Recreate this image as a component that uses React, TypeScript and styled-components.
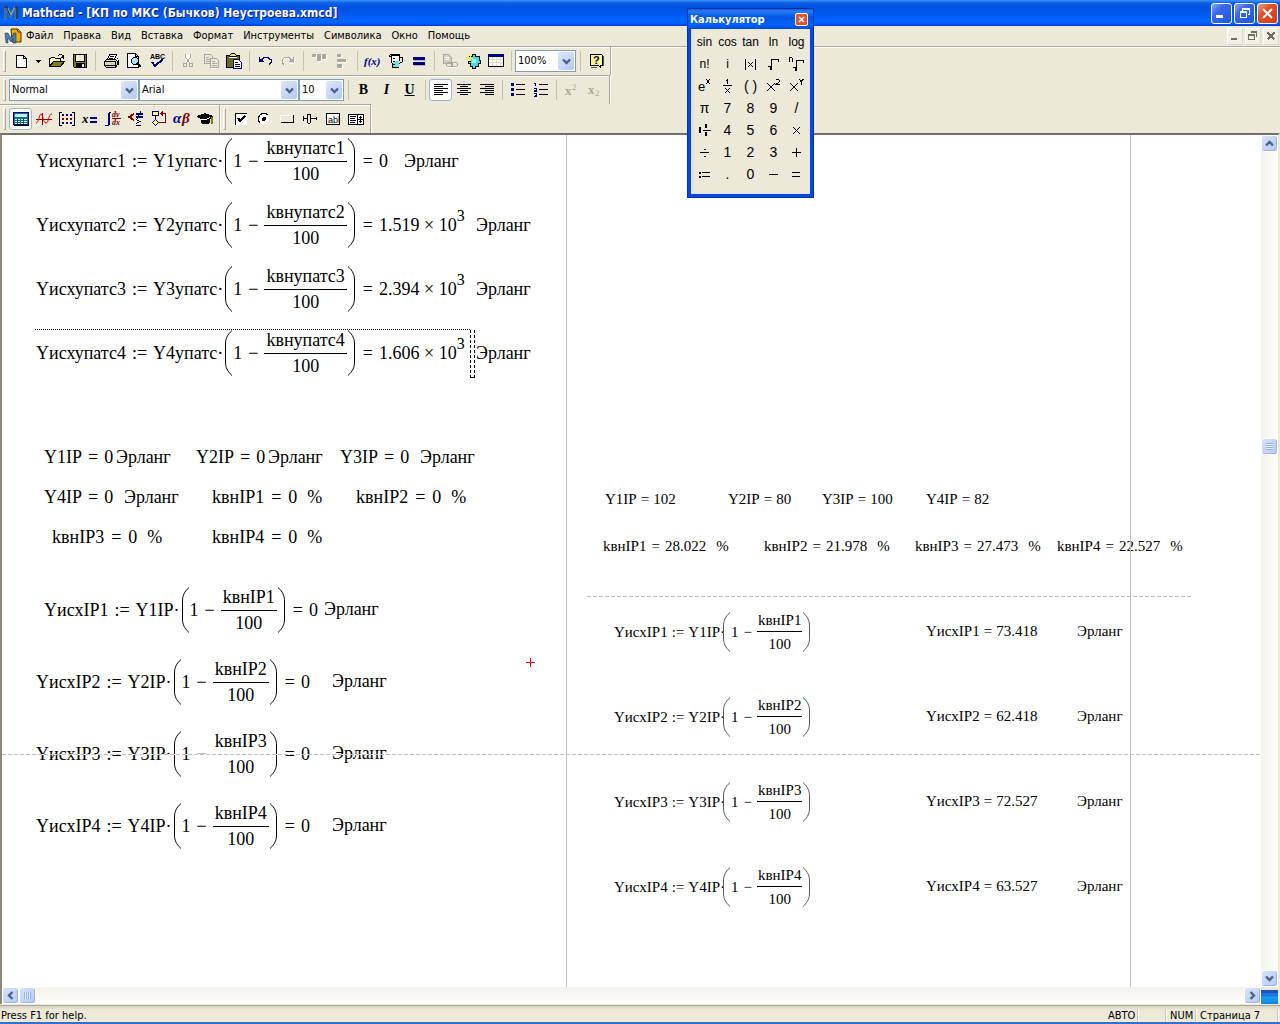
import React, { ReactNode } from "react";
import styled, { createGlobalStyle, css } from "styled-components";

const ui = `Tahoma, "DejaVu Sans Condensed", "Noto Sans", sans-serif`;
const serif = `"Liberation Serif", "Times New Roman", serif`;
const face = "#ece9d8";
const shade = "#aca899";
const navy = "#000080";

const GlobalStyle = createGlobalStyle`
  body { margin: 0; background: ${face}; }
  *, *::before, *::after { box-sizing: border-box; }
  button, select { font: inherit; color: inherit; margin: 0; }
  svg { overflow: visible; }
`;

const Frame = styled.div`
  position: relative;
  display: flex;
  flex-direction: column;
  height: 100vh;
  overflow: hidden;
  background: ${face};
  border-bottom: 2px solid #2f71cd;
  font: 11px/14px ${ui};
  color: #000;
`;

/* ---------- title bar ---------- */

const TitleBar = styled.header`
  display: flex;
  align-items: center;
  gap: 3px;
  height: 26px;
  flex: none;
  padding: 0 2px 0 3px;
  background: linear-gradient(#3f94ff 0, #0a5fe6 3px, #0053e1 8px, #0058ee 14px, #0066ff 20px, #0063f7 23px, #003dd7 26px);
`;

const Title = styled.h1`
  flex: 1;
  margin: 0;
  font: bold 12px/18px "Trebuchet MS", "DejaVu Sans Condensed", sans-serif;
  color: #fff;
  text-shadow: 1px 1px 0 #0f1089;
  white-space: nowrap;
`;

const CaptionButton = styled.button<{ $close?: boolean }>`
  display: grid;
  place-items: center;
  width: 21px;
  height: 21px;
  padding: 0;
  border: 1px solid #fff;
  border-radius: 3px;
  background: ${(p) =>
    p.$close
      ? "linear-gradient(135deg, #f0a08a 0, #e0532f 35%, #d03d12 100%)"
      : "linear-gradient(135deg, #8ba9f5 0, #3a68e4 35%, #1c55f0 100%)"};
  & + & { margin-left: -1px; }
`;

/* ---------- menu ---------- */

const MenuBar = styled.nav`
  display: flex;
  align-items: center;
  height: 20px;
  flex: none;
  padding: 0 1px 0 5px;
`;

const MenuItem = styled.button`
  padding: 0 5px;
  border: 0;
  background: none;
  line-height: 16px;
`;

const ChildButtons = styled.div`
  display: flex;
  gap: 2px;
  margin-left: auto;
`;

const ChildButton = styled.button`
  display: grid;
  place-items: center;
  width: 16px;
  height: 17px;
  padding: 0;
  border: 1px solid;
  border-color: #fff #dcd9ca #dcd9ca #fff;
  background: #f1efe4;
`;

/* ---------- toolbars ---------- */

const Rebar = styled.div`
  display: flex;
  flex-direction: column;
  flex: none;
`;

const RebarRow = styled.div<{ $short?: boolean }>`
  display: flex;
  align-self: ${(p) => (p.$short ? "flex-start" : "stretch")};
  height: 29px;
  border-top: 1px solid ${shade};
  box-shadow: inset 0 1px #fff;
`;

const Toolbar = styled.div`
  display: flex;
  align-items: center;
  padding: 1px 3px 1px 3px;
  border-right: 1px solid ${shade};
  box-shadow: 1px 0 #fff;
  &::before {
    content: "";
    width: 3px;
    height: 22px;
    margin-right: 3px;
    border: solid;
    border-width: 1px;
    border-color: #fff ${shade} ${shade} #fff;
  }
`;

const ToolButton = styled.button<{ $active?: boolean; $narrow?: boolean }>`
  display: grid;
  place-items: center;
  width: ${(p) => (p.$narrow ? 13 : 23)}px;
  height: 22px;
  padding: 0;
  border: 1px solid transparent;
  border-radius: 3px;
  background: none;
  ${(p) =>
    p.$active &&
    css`
      border-color: #98b5d3;
      background: #fff;
    `}
`;

const Divider = styled.span`
  width: 1px;
  height: 20px;
  margin: 0 3px 0 4px;
  background: #c5c2b2;
`;

const ComboFrame = styled.label<{ $width: number }>`
  display: grid;
  grid-template-columns: 1fr 17px;
  align-items: center;
  width: ${(p) => p.$width}px;
  height: 22px;
  border: 1px solid #7f9db9;
  background: #fff;
`;

const ComboSelect = styled.select`
  grid-area: 1 / 1 / 2 / 3;
  height: 20px;
  padding: 0 18px 0 2px;
  border: 0;
  background: none;
  appearance: none;
  outline: none;
`;

const ComboArrow = styled.span`
  grid-area: 1 / 2;
  display: grid;
  place-items: center;
  width: 16px;
  height: 18px;
  border-radius: 2px;
  background: linear-gradient(135deg, #dde6fd, #b4c8f6);
  pointer-events: none;
`;

const Letter = styled.span<{ $kind: "b" | "i" | "u" }>`
  font: ${(p) => (p.$kind === "i" ? "italic bold" : "bold")} 14px/16px ${serif};
  text-decoration: ${(p) => (p.$kind === "u" ? "underline" : "none")};
`;

/* ---------- document ---------- */

const DocFrame = styled.div`
  display: grid;
  grid-template-columns: 1fr 17px;
  grid-template-rows: 1fr 17px;
  flex: 1;
  min-height: 0;
  border: solid;
  border-width: 2px 2px 0 2px;
  border-color: #716f64 ${face} ${face} #8b887a;
`;

const Sheet = styled.main`
  position: relative;
  overflow: hidden;
  background: #fff;
  font: 18px/20px ${serif};
`;

const Region = styled.div<{ $x: number; $y: number; $small?: boolean }>`
  position: absolute;
  left: ${(p) => p.$x}px;
  top: ${(p) => p.$y}px;
  display: flex;
  align-items: center;
  white-space: nowrap;
  ${(p) =>
    p.$small &&
    css`
      font-size: 15px;
      line-height: 16px;
    `}
`;

const Operator = styled.span<{ $gap: number }>`
  margin: 0 ${(p) => p.$gap}px;
`;

const Fraction = styled.span<{ $small?: boolean }>`
  display: flex;
  flex-direction: column;
  text-align: center;
  & > :first-child { padding: 0 ${(p) => (p.$small ? 1 : 2)}px 3px; }
  & > :last-child { padding-top: ${(p) => (p.$small ? 4 : 2)}px; border-top: 1px solid #000; }
`;

const Power = styled.sup`
  font-size: 16px;
  line-height: 20px;
  padding-bottom: 18px;
  vertical-align: baseline;
`;

const Percent = styled.span`
  margin-left: 10px;
`;

const MarginLine = styled.div<{ $x: number }>`
  position: absolute;
  top: 0;
  bottom: 0;
  left: ${(p) => p.$x}px;
  width: 1px;
  background: #c0c0c0;
`;

const PageBreak = styled.div<{ $x: number; $y: number; $width?: number }>`
  position: absolute;
  left: ${(p) => p.$x}px;
  top: ${(p) => p.$y}px;
  ${(p) => (p.$width ? `width: ${p.$width}px;` : "right: 0;")}
  height: 1px;
  background: repeating-linear-gradient(90deg, #c0c0c0 0 4px, #fff 4px 6px);
`;

const SelectionTop = styled.div`
  position: absolute;
  left: 33px;
  top: 194px;
  width: 436px;
  height: 1px;
  background: repeating-linear-gradient(90deg, #000 0 1px, #fff 1px 2px);
`;

const SelectionEdge = styled.div`
  position: absolute;
  left: 468px;
  top: 195px;
  width: 5px;
  height: 48px;
  border: 1px dashed #000;
  border-top: 0;
`;

const Crosshair = styled.svg`
  position: absolute;
  left: 524px;
  top: 523px;
`;

/* ---------- scroll bars ---------- */

const ScrollBar = styled.div<{ $vertical?: boolean }>`
  display: flex;
  flex-direction: ${(p) => (p.$vertical ? "column" : "row")};
  background: linear-gradient(${(p) => (p.$vertical ? "90deg" : "180deg")}, #f3f1ec, #fefefb);
`;

const ScrollButton = styled.button`
  display: grid;
  place-items: center;
  width: 17px;
  height: 17px;
  flex: none;
  padding: 0;
  border: 1px solid #fff;
  border-radius: 3px;
  background: linear-gradient(135deg, #d6e2fd, #b5caf8);
  box-shadow: inset -1px -1px #9cb4e4;
`;

const Track = styled.span<{ $grow: number }>`
  flex: ${(p) => p.$grow} 1 0;
`;

const Corner = styled.div`
  margin-top: 3px;
  background: linear-gradient(#1c55c8 0 3px, #2a8cf0 4px, #1263d4 5px, #1a9cf0 7px, #1785e0 100%);
`;

/* ---------- status bar ---------- */

const StatusBar = styled.footer`
  display: flex;
  align-items: center;
  height: 17px;
  flex: none;
  margin-top: 1px;
  padding: 3px 2px 0 0;
  border-top: 1px solid ${shade};
  background: linear-gradient(#d6d3c3, ${face} 4px);
`;

const StatusHint = styled.span`
  flex: 1;
  padding-left: 1px;
`;

const StatusCell = styled.span<{ $width: number }>`
  width: ${(p) => p.$width}px;
  height: 13px;
  line-height: 13px;
  padding-left: 4px;
  border-right: 1px solid #c8c5b5;
  box-shadow: 1px 0 #fff;
  white-space: nowrap;
`;

/* ---------- calculator palette ---------- */

const Palette = styled.section`
  position: absolute;
  left: 687px;
  top: 8px;
  width: 127px;
  height: 190px;
  border: solid #0a46dd;
  border-width: 0 4px 4px;
  background: ${face};
  box-shadow: inset 0 0 0 1px #d8e4fb, inset 1px 0 #0a46dd;
  outline: 1px solid #0831a8;
  outline-offset: -1px;
`;

const PaletteTitle = styled.header`
  display: flex;
  align-items: center;
  justify-content: space-between;
  height: 21px;
  margin: 0 -3px;
  padding: 2px 5px 0 2px;
  background: linear-gradient(#0a3fc4, #2a7cf5 3px, #0055e5 9px, #0062fa 17px, #0048d8);
  color: #fff;
  font-weight: bold;
`;

const PaletteClose = styled.button`
  display: grid;
  place-items: center;
  width: 13px;
  height: 13px;
  padding: 0;
  border: 1px solid #fff;
  border-radius: 2px;
  background: #e0532f;
`;

const Keys = styled.div`
  display: grid;
  grid-template-columns: repeat(5, 23px);
  grid-auto-rows: 22px;
  justify-content: center;
  padding-top: 2px;
`;

const Key = styled.button<{ $word?: boolean }>`
  display: grid;
  place-items: center;
  padding: 0;
  border: 0;
  background: none;
  font: ${(p) => (p.$word ? 12 : 14)}px/16px "Liberation Sans", Arial, sans-serif;
`;

/* ---------- drawings ---------- */

const Pic = ({ children, size = 16, w, h }: { children: ReactNode; size?: number; w?: number; h?: number }) => (
  <svg width={w ?? size} height={h ?? size} viewBox={`0 0 ${w ?? size} ${h ?? size}`} shapeRendering="crispEdges" aria-hidden="true">
    {children}
  </svg>
);

const L = ({ d, c = "#000", w = 1 }: { d: string; c?: string; w?: number }) => (
  <path d={d} fill="none" stroke={c} strokeWidth={w} />
);

const Chevron = ({ dir }: { dir: "up" | "down" | "left" | "right" }) => {
  const turn = { down: 0, up: 180, left: 90, right: 270 }[dir];
  return (
    <svg width="9" height="9" viewBox="0 0 9 9" aria-hidden="true">
      <path d="M1 2.5 4.5 6 8 2.5" fill="none" stroke="#4d6185" strokeWidth="2.4" transform={`rotate(${turn} 4.5 4.5)`} />
    </svg>
  );
};

const Grip = ({ vertical }: { vertical?: boolean }) => (
  <Pic size={9}>
    <g transform={vertical ? undefined : "rotate(90 4.5 4.5)"}>
      <L d="M1 1.5h7M1 3.5h7M1 5.5h7M1 7.5h7" c="#8cb0f8" />
      <L d="M1 2.5h7M1 4.5h7M1 6.5h7" c="#eef4fe" />
    </g>
  </Pic>
);

const LogoM = () => (
  <svg width="16" height="16" viewBox="0 0 16 16" aria-hidden="true">
    <path d="M0 1h5l3 6 3-6h4v12l1 2h-5V7l-3 7h-1L4 7v8H0l1-2V3z" fill="#3f6f9f" />
    <path d="M1 2h3l3 8M12 2h2v12" fill="none" stroke="#1d3553" strokeWidth="1.5" />
    <path d="M5 3l3 7 3-7" fill="none" stroke="#8fb0c8" />
  </svg>
);

const DocLogo = () => (
  <svg width="16" height="16" viewBox="0 0 16 16" aria-hidden="true">
    <path d="M0 2h8v14H0z" fill="#fff" />
    <path d="M6 1h7l3 3v10H7z" fill="#f5a800" stroke="#4a3200" />
    <path d="M12 1l1 3h3" fill="#ffe08a" stroke="#4a3200" />
    <path d="M0 5h3l3 5 3-5h2v10H8V10l-2 4-3-4v5H1z" fill="#4d7fa5" stroke="#1e3850" strokeWidth=".6" />
  </svg>
);

const icons: Record<string, ReactNode> = {
  new: <Pic><path d="M3.5 2.5h7l3 3v9h-10z" fill="#fff" stroke="#000" /><L d="M10.5 2.5v3h3" /></Pic>,
  drop: <Pic w={5} h={3}><path d="M0 0h5v1H4v1H3v1H2V2H1V1H0z" /></Pic>,
  open: (
    <Pic>
      <path d="M.5 13.5v-8h1l1-1h3l1 1h5v3" fill="#ffff9c" stroke="#000" />
      <path d="M.5 13.5l4-5h11l-4 5z" fill="#808000" stroke="#000" />
      <L d="M9 2.5h1M10 1.5h3M13 2.5h1M14.5 2v4M12 4.5h3M13 3.5h2" />
    </Pic>
  ),
  save: (
    <Pic>
      <path d="M1.5 1.5h13v13h-12l-1-1z" fill="#808000" stroke="#000" />
      <path d="M4 2h8v6H4z" fill={face} /><path d="M4 9.5h9V15H4z" /><path d="M10 11h2v3h-2z" fill={face} />
      <L d="M3.5 2v6.5h9V2" />
    </Pic>
  ),
  print: (
    <Pic>
      <path d="M4.5 6.5l2-5h7l-2 5" fill="#fff" stroke="#000" /><L d="M7 3.5h4M6 5.5h4" />
      <path d="M1.5 8.5l2-2h9l2 2v3l-2 3h-9l-2-2z" fill="#d8d4c4" stroke="#000" />
      <L d="M1 8.5h11M2 12.5h11M12.5 8v6M15 6.5v5M14 5.5h1M4 14.5h9" /><L d="M8 10.5h2" c="#e0d800" />
    </Pic>
  ),
  preview: (
    <Pic>
      <path d="M1.5.5h8l3 3v11h-11z" fill="#fff" stroke="#000" /><L d="M9.5.5v3h3" />
      <circle cx="9" cy="8" r="3.5" fill="#9fe8ee" stroke="#000" /><L d="M11 10l4 4" w={2} /><L d="M8 6.5h1" c="#fff" />
    </Pic>
  ),
  spell: (
    <Pic>
      <text x="1" y="6" fontSize="7" fontWeight="bold" fontFamily="Liberation Sans">ABC</text>
      <L d="M3 9l3 4 8-7" c={navy} w={2} />
    </Pic>
  ),
  cut: (
    <Pic>
      <L d="M6 1l4 9M10 1L6 10" c="#fff" w={2} /><L d="M5.5 1v3l4 6M10.5 1v3l-4 6" c={shade} />
      <circle cx="5" cy="12" r="2" fill="none" stroke={shade} /><circle cx="11" cy="12" r="2" fill="none" stroke={shade} />
    </Pic>
  ),
  copy: (
    <Pic>
      <path d="M1.5 1.5h6l2 2v7h-8z" fill={face} stroke={shade} /><L d="M3 4.5h3M3 6.5h4M3 8.5h4" c={shade} />
      <path d="M7.5 5.5h6l2 2v7h-8z" fill={face} stroke={shade} /><L d="M9 8.5h3M9 10.5h5M9 12.5h5" c={shade} /><L d="M8 15.5h8" c="#fff" />
    </Pic>
  ),
  paste: (
    <Pic>
      <path d="M.5 2.5h13v12H.5z" fill="#6b6b1a" stroke="#000" /><path d="M3.5 3.5v-1l2-2h3l2 2v1z" fill="#f4ee60" stroke="#000" />
      <L d="M3 4.5h8" c="#fff" /><path d="M7.5 6.5h5l3 3v6h-8z" fill="#fff" stroke={navy} /><L d="M9 9.5h3M9 11.5h5M9 13.5h5" c={navy} />
    </Pic>
  ),
  undo: <Pic><L d="M2.5 4v5M2 8.5h5M3 7.5h3M3 6.5h2M5 6.5l2-2h4l3 2v3l-2 2" c={navy} /><L d="M6 5.5l2-1h3l2 2" c={navy} /></Pic>,
  redo: (
    <Pic>
      <L d="M14.5 5v5H9M11 6.5L9 5.5H5l-2 2v3l2 2" c="#fff" /><L d="M13.5 4v5M14 8.5H9M13 7.5h-3M13 6.5h-2M11 6.5l-2-2H5l-3 2v3l2 2" c={shade} />
    </Pic>
  ),
  alignTop: <Pic><path d="M2 2h4v3H2zM7 2h4v7H7zM12 2h4v5h-4z" fill="#fff" /><path d="M1 1h4v3H1zM6 1h4v7H6zM11 1h4v5h-4z" fill={shade} /></Pic>,
  alignLeft: <Pic><path d="M4 2h4v3H4zM4 7h9v3H4zM4 12h5v4H4z" fill="#fff" /><path d="M3 1h4v3H3zM3 6h9v3H3zM3 11h5v4H3z" fill={shade} /></Pic>,
  fx: (
    <svg width="18" height="16" viewBox="0 0 18 16" aria-hidden="true">
      <text x="0" y="12" fontSize="11" fontStyle="italic" fontWeight="bold" fontFamily="Liberation Serif" fill={navy}>f(x)</text>
    </svg>
  ),
  cup: (
    <Pic>
      <path d="M3.5 2.5h8l-1 12h-6l-1-9z" fill="#fff" stroke="#000" /><path d="M5 8h6v6H5z" fill="#6fe3ea" />
      <L d="M1.5 1.5h10M11 4.5h3.5v4l-3 2M5 5.5h2M5 8.5h2M5 11.5h2M1.5 1.5v2h2" />
    </Pic>
  ),
  equals: <Pic><path d="M2 4h12v3H2zM2 9h12v3H2z" fill={navy} /><L d="M3 7.5h12M3 12.5h12" c="#b8b5a5" /></Pic>,
  link: (
    <Pic>
      <path d="M1.5 1.5h5l3 3v6h-8z" fill="#d3d0c0" stroke={shade} /><L d="M3 4.5h4M3 6.5h4" c="#fff" />
      <rect x="4.5" y="9.5" width="6" height="4" rx="2" fill="none" stroke={shade} /><rect x="9.5" y="9.5" width="6" height="4" rx="2" fill="none" stroke={shade} />
      <L d="M5 14.5h10" c="#fff" />
    </Pic>
  ),
  component: (
    <Pic>
      <path d="M4 3h3V1h3v2h4v4h1v3h-2v3h-3v2H7v-2H5v-3H3V8h2V5z" fill="#3fdbe6" stroke="#000" />
      <L d="M1 1l5 5M5 0v8M0 5h8M1 8l5-5" c="#ffee30" /><path d="M7 6h4v4H7z" fill="#a8f2f5" />
    </Pic>
  ),
  table: <Pic><path d="M.5 1.5h15v12H.5z" fill="#fff" stroke="#000" /><path d="M0 1h16v3H0z" fill={navy} /><L d="M1 6.5h14M1 9.5h14M4.5 4v9M8.5 4v9M12.5 4v9" c="#e6dccb" /></Pic>,
  help: (
    <Pic>
      <path d="M2.5 1.5h11l1 1v10h-2v2l-2-2h-8z" fill="#fffb80" stroke="#000" /><L d="M3 14.5h6M15.5 3v10" c="#555" />
      <text x="5" y="11" fontSize="11" fontWeight="bold" fontFamily="Liberation Sans" fill={navy}>?</text>
    </Pic>
  ),
  left: <Pic><L d="M1 2.5h14M1 4.5h9M1 6.5h14M1 8.5h9M1 10.5h14M1 12.5h9" /></Pic>,
  center: <Pic><L d="M1 2.5h14M4 4.5h8M1 6.5h14M4 8.5h8M1 10.5h14M4 12.5h8" /></Pic>,
  right: <Pic><L d="M1 2.5h14M6 4.5h9M1 6.5h14M6 8.5h9M1 10.5h14M6 12.5h9" /></Pic>,
  bullets: <Pic><path d="M1 1h3v3H1zM1 6h3v3H1zM1 11h3v3H1z" fill={navy} /><L d="M6 2.5h9M6 7.5h9M6 12.5h9" /></Pic>,
  numbers: <Pic><L d="M1 1.5h2M2.5 1v3M1 6.5h2v1.5h-1.5v1.5H4M1 11.5h2.5v3H1M2 13h1" c={navy} /><L d="M6 2.5h9M6 7.5h9M6 12.5h9" /></Pic>,
  sup: <Pic><text x="1" y="13" fontSize="13" fontWeight="bold" fontFamily="Liberation Serif" fill={shade}>x</text><text x="8" y="8" fontSize="9" fontFamily="Liberation Serif" fill={shade}>2</text></Pic>,
  sub: <Pic><text x="1" y="12" fontSize="13" fontWeight="bold" fontFamily="Liberation Serif" fill={shade}>x</text><text x="8" y="14" fontSize="9" fontFamily="Liberation Serif" fill={shade}>2</text></Pic>,
  calc: (
    <Pic>
      <path d="M.5 1.5h15v12H.5z" fill="#1a6f86" stroke={navy} /><path d="M2 3h12v3H2z" fill="#bdf3f3" /><L d="M1 14.5h15" />
      <L d="M2 8.5h12M2 10.5h12M2 12.5h12" c="#d9fbfb" /><L d="M4.5 8v5M7.5 8v5M10.5 8v5" c="#1a4f86" />
    </Pic>
  ),
  graph: <Pic><L d="M0 8.5h16M6.5 2v12" c="#800000" /><path d="M0 12c3 0 3-9 5-9s2 9 5 9 2-9 6-9" fill="none" stroke="#e00000" shapeRendering="auto" /></Pic>,
  matrix: (
    <Pic>
      <L d="M3 1.5H.5v13H3M13 1.5h2.5v13H13" />
      <path d="M3 3h2v2H3zM7 3h2v2H7zM11 3h2v2h-2zM3 11h2v2H3zM7 11h2v2H7zM11 11h2v2h-2z" fill={navy} /><path d="M3 7h2v2H3zM7 7h2v2H7zM11 7h2v2h-2z" fill="#800000" />
    </Pic>
  ),
  xeq: <Pic><text x="0" y="12" fontSize="13" fontStyle="italic" fontWeight="bold" fontFamily="Liberation Serif">x</text><path d="M8 6h7v2H8zM8 10h7v2H8z" fill={navy} /></Pic>,
  integral: (
    <Pic>
      <path d="M6 1.5H5c-1 0-1 1-1 2v9c0 1 0 2-2 2H0" fill="none" stroke={navy} strokeWidth="1.6" /><L d="M7 7.5h9" c="#800000" />
      <text x="7" y="6" fontSize="8" fontStyle="italic" fontWeight="bold" fontFamily="Liberation Serif" fill="#800000">dy</text>
      <text x="7" y="14" fontSize="8" fontStyle="italic" fontWeight="bold" fontFamily="Liberation Serif" fill="#800000">dx</text>
    </Pic>
  ),
  bool: <Pic><L d="M6 3L1 6l5 3" c="#800000" w={2} /><path d="M8 2h7v2H8zM8 5h7v2H8z" fill={navy} /><L d="M13 0L9 8" c={navy} /><L d="M8 8.5l4 2-4 2M8 14.5h5" /></Pic>,
  program: (
    <Pic>
      <path d="M1.5.5h6v4h-6z" fill="#ffff80" stroke={navy} /><path d="M4.5 8.5l3 3-3 3-3-3z" fill="#ffff80" stroke={navy} /><L d="M4.5 5v4" c={navy} />
      <L d="M8 11.5h6.5v-9H10M12 0.5l-2 2 2 2" c="#800000" />
    </Pic>
  ),
  greek: (
    <svg width="18" height="16" viewBox="0 0 18 16" aria-hidden="true">
      <text x="0" y="12" fontSize="15" fontStyle="italic" fontWeight="bold" fontFamily="Liberation Serif" fill={navy}>α</text>
      <text x="9" y="12" fontSize="15" fontStyle="italic" fontWeight="bold" fontFamily="Liberation Serif" fill="#800000">β</text>
    </svg>
  ),
  cap: <Pic><path d="M0 5l8-3 8 3v2l-3 1v4l-3 1H6l-2-1V8L0 6z" /><L d="M4 8.5h5l4-2" c="#fff" /><L d="M14.5 6v7" c="#808000" w={2} /></Pic>,
  check: <Pic><path d="M2.5 2.5h11v11h-11z" fill="#fff" stroke="#000" /><L d="M13.5 3v10.5H3" c="#fff" /><L d="M5 7l2 3 5-5" w={2} /></Pic>,
  radio: <Pic><circle cx="8" cy="8" r="5" fill="#fff" stroke="#fff" /><path d="M4 12a5 5 0 0 1 8-8" fill="none" stroke="#000" /><circle cx="8" cy="8" r="2" /></Pic>,
  push: <Pic><path d="M2 5h12v6H2z" fill={face} /><L d="M2 4.5h11M1.5 4v7" c="#fff" /><L d="M2 11.5h12.5V4" /></Pic>,
  slider: <Pic><L d="M1 7.5h4M9 7.5h5M1.5 5v5M14.5 6v3" /><path d="M5.5 3.5h3v8l-1 1h-1l-1-1z" fill={face} stroke="#000" /></Pic>,
  text: <Pic><path d="M1.5 2.5h13v11h-13z" fill="#fff" stroke="#000" /><text x="3" y="12" fontSize="9" fontFamily="Liberation Sans">abl</text></Pic>,
  list: <Pic><path d="M.5 3.5h15v10H.5z" fill="#fff" stroke="#000" /><L d="M2 5.5h6M2 7.5h5M2 9.5h6M2 11.5h5M9.5 4v10M10 8.5h5M12.5 5v3M12.5 9v3M11 6.5h3M11 10.5h3" /></Pic>,
};

const WinGlyph = ({ kind, c }: { kind: "min" | "restore" | "close"; c: string }) => (
  <svg width="11" height="11" viewBox="0 0 11 11" aria-hidden="true" shapeRendering={kind === "close" ? "auto" : "crispEdges"}>
    {kind === "min" && <path d="M0 7h7v3H0z" fill={c} />}
    {kind === "restore" && <><path d="M3 0h8v2H3zM10 2h1v5H9V6h1zM3 2h1v1H3z" fill={c} /><path d="M1.5 4.5h6v5h-6zM1 3.5h7" fill="none" stroke={c} /></>}
    {kind === "close" && <path d="M1 1l9 9M10 1l-9 9" stroke={c} strokeWidth="2" />}
  </svg>
);

const SmallGlyph = ({ kind }: { kind: "min" | "restore" | "close" }) => (
  <svg width="10" height="10" viewBox="0 0 10 10" aria-hidden="true" shapeRendering="crispEdges">
    {kind === "min" && <path d="M1 7h6v2H1z" fill="#6f6d60" />}
    {kind === "restore" && <path d="M3 1h6M8.5 1v5M.5 4.5h6v4h-6zM0 4.5h7M3 .5h6M0 3.5h7" fill="none" stroke="#6f6d60" />}
    {kind === "close" && <path d="M1.5 1.5l7 7M8.5 1.5l-7 7" stroke="#6f6d60" strokeWidth="2" />}
  </svg>
);

const ParenShape = styled.svg<{ $tuck: boolean }>`
  margin-left: ${(p) => (p.$tuck ? -3 : 0)}px;
`;

const Paren = ({ side, small }: { side: "left" | "right"; small?: boolean }) => {
  const h = small ? 40 : 46;
  const w = small ? 9 : 10;
  const d = `M9 .5C4 5 2.5 9 2.5 14V${h - 14}C2.5 ${h - 9} 4 ${h - 5} 9 ${h - 0.5}`;
  return (
    <ParenShape $tuck={!!small && side === "left"} width={w} height={h} viewBox={`${10 - w} 0 ${w} ${h}`} aria-hidden="true">
      <path d={d} fill="none" stroke={small ? "#555" : "#000"} transform={side === "right" ? `translate(${20 - w} 0) scale(-1 1)` : undefined} />
    </ParenShape>
  );
};

/* ---------- composed parts ---------- */

const Tool = ({ icon, label, active, narrow }: { icon: string; label: string; active?: boolean; narrow?: boolean }) => (
  <ToolButton type="button" title={label} aria-label={label} $active={active} $narrow={narrow}>
    {icons[icon]}
  </ToolButton>
);

const Combo = ({ label, value, width }: { label: string; value: string; width: number }) => (
  <ComboFrame $width={width}>
    <ComboSelect aria-label={label} defaultValue={value}>
      <option>{value}</option>
    </ComboSelect>
    <ComboArrow><Chevron dir="down" /></ComboArrow>
  </ComboFrame>
);

type FormulaProps = { x: number; y: number; name: string; source: string; factor: string; result?: ReactNode; small?: boolean };

const Formula = ({ x, y, name, source, factor, result, small }: FormulaProps) => (
  <Region $x={x} $y={y} $small={small}>
    <span>{name}</span>
    <Operator $gap={small ? 4 : 6}>:=</Operator>
    <span>{source}·</span>
    <Paren side="left" small={small} />
    <span>1</span>
    <Operator $gap={small ? 5 : 6}>−</Operator>
    <Fraction $small={small}>
      <span>{factor}</span>
      <span>100</span>
    </Fraction>
    <Paren side="right" small={small} />
    {result !== undefined && (
      <>
        <Operator $gap={6}>=</Operator>
        {result}
      </>
    )}
  </Region>
);

type ValueProps = { x: number; y: number; name: string; value: string; percent?: boolean; small?: boolean };

const Value = ({ x, y, name, value, percent, small }: ValueProps) => (
  <Region $x={x} $y={y} $small={small}>
    <span>{name}</span>
    <Operator $gap={(small ? 4 : 6) + (percent ? 1 : 0)}>=</Operator>
    <span>{value}</span>
    {percent && <Percent>%</Percent>}
  </Region>
);

const Scientific = ({ mantissa }: { mantissa: string }) => (
  <>
    <span>{mantissa} × 10</span>
    <Power>3</Power>
  </>
);

const atsResults = [<span key="0">0</span>, <Scientific key="1" mantissa="1.519" />, <Scientific key="2" mantissa="2.394" />, <Scientific key="3" mantissa="1.606" />];

const values: ValueProps[] = [
  { x: 42, y: 312, name: "Y1IP", value: "0" },
  { x: 194, y: 312, name: "Y2IP", value: "0" },
  { x: 338, y: 312, name: "Y3IP", value: "0" },
  { x: 42, y: 352, name: "Y4IP", value: "0" },
  { x: 210, y: 352, name: "kвнIP1", value: "0", percent: true },
  { x: 354, y: 352, name: "kвнIP2", value: "0", percent: true },
  { x: 50, y: 392, name: "kвнIP3", value: "0", percent: true },
  { x: 210, y: 392, name: "kвнIP4", value: "0", percent: true },
  { x: 603, y: 356, name: "Y1IP", value: "102", small: true },
  { x: 726, y: 356, name: "Y2IP", value: "80", small: true },
  { x: 820, y: 356, name: "Y3IP", value: "100", small: true },
  { x: 924, y: 356, name: "Y4IP", value: "82", small: true },
  { x: 601, y: 403, name: "kвнIP1", value: "28.022", percent: true, small: true },
  { x: 762, y: 403, name: "kвнIP2", value: "21.978", percent: true, small: true },
  { x: 913, y: 403, name: "kвнIP3", value: "27.473", percent: true, small: true },
  { x: 1055, y: 403, name: "kвнIP4", value: "22.527", percent: true, small: true },
  { x: 924, y: 488, name: "YисхIP1", value: "73.418", small: true },
  { x: 924, y: 573, name: "YисхIP2", value: "62.418", small: true },
  { x: 924, y: 658, name: "YисхIP3", value: "72.527", small: true },
  { x: 924, y: 743, name: "YисхIP4", value: "63.527", small: true },
];

const units = [
  [402, 16], [474, 80], [474, 144], [474, 208],
  [114, 312], [266, 312], [418, 312], [122, 352],
  [322, 464], [330, 536], [330, 608], [330, 680],
];

const keys: [string, ReactNode, boolean?][] = [
  ["sin", "sin", true], ["cos", "cos", true], ["tan", "tan", true], ["ln", "ln", true], ["log", "log", true],
  ["factorial", "n!", true], ["i", "i", true], ["absolute value", <Pic key="a" w={13} h={12}><L d="M1.5 1v11M11.5 1v11M4 4l5 5M9 4l-5 5" /></Pic>],
  ["square root", <Pic key="s" w={13} h={12}><L d="M1 8.5h2M3.5 8v4M4.5 12V1.5H12M11.5 1v3" /></Pic>],
  ["nth root", <Pic key="n" w={17} h={14}><L d="M1.5 0v5M1 .5h3M4.5 1v4M5 10.5h2M7.5 10v4M8.5 14V3.5H16M15.5 3v3" /></Pic>],
  ["exponential", <Pic key="e" w={15} h={16}><text x="1" y="13" fontSize="13" fontFamily="Liberation Sans">e</text><L d="M9 1l4 5M13 1L9 6" /></Pic>],
  ["inverse", <Pic key="v" w={11} h={16}><L d="M1 7.5h9M5.5 1v5M4 2.5h1M3 10l5 5M8 10l-5 5" /></Pic>],
  ["parentheses", "( )"],
  ["square", <Pic key="q" w={15} h={16}><L d="M1 5l8 8M9 5l-8 8M10 1.5h3M13.5 2v1.5L10 6.5h4" /></Pic>],
  ["power", <Pic key="p" w={15} h={16}><L d="M1 5l8 8M9 5l-8 8M10 1l2 2.5L14.5 1M12 3v4" /></Pic>],
  ["pi", "π"], ["7", "7"], ["8", "8"], ["9", "9"], ["divide inline", "/"],
  ["mixed number", <Pic key="m" w={12} h={14}><path d="M0 4h2v6H0zM6 1h2v4H6zM6 9h2v4H6z" /><L d="M4 7.5h8M2 4.5h-1" /></Pic>],
  ["4", "4"], ["5", "5"], ["6", "6"],
  ["multiply", <Pic key="x" w={9} h={9}><L d="M1 1l7 7M8 1L1 8" /></Pic>],
  ["divide", <Pic key="d" w={9} h={9}><L d="M0 4.5h9M4 1h2M4 8h2" /></Pic>],
  ["1", "1"], ["2", "2"], ["3", "3"],
  ["add", <Pic key="+" w={9} h={9}><L d="M0 4.5h9M4.5 0v9" /></Pic>],
  ["define", <Pic key=":" w={11} h={9}><path d="M0 2h2v2H0zM0 6h2v2H0z" /><L d="M3 2.5h8M3 6.5h8" /></Pic>],
  ["point", "."], ["0", "0"],
  ["subtract", <Pic key="-" w={9} h={9}><L d="M0 4.5h9" /></Pic>],
  ["evaluate", <Pic key="=" w={9} h={9}><L d="M0 2.5h8M0 6.5h8" /></Pic>],
];

const menus = ["Файл", "Правка", "Вид", "Вставка", "Формат", "Инструменты", "Символика", "Окно", "Помощь"];

export default function App() {
  return (
    <Frame>
      <GlobalStyle />
      <TitleBar>
        <LogoM />
        <Title>Mathcad - [КП по МКС (Бычков) Неустроева.xmcd]</Title>
        <CaptionButton type="button" aria-label="Minimize"><WinGlyph kind="min" c="#fff" /></CaptionButton>
        <CaptionButton type="button" aria-label="Restore"><WinGlyph kind="restore" c="#fff" /></CaptionButton>
        <CaptionButton type="button" aria-label="Close" $close><WinGlyph kind="close" c="#fff" /></CaptionButton>
      </TitleBar>

      <MenuBar>
        <DocLogo />
        {menus.map((m) => <MenuItem type="button" key={m}>{m}</MenuItem>)}
        <ChildButtons>
          <ChildButton type="button" aria-label="Minimize document"><SmallGlyph kind="min" /></ChildButton>
          <ChildButton type="button" aria-label="Restore document"><SmallGlyph kind="restore" /></ChildButton>
          <ChildButton type="button" aria-label="Close document"><SmallGlyph kind="close" /></ChildButton>
        </ChildButtons>
      </MenuBar>

      <Rebar>
        <RebarRow>
          <Toolbar>
            <Tool icon="new" label="New" /><Tool icon="drop" label="New from template" narrow />
            <Tool icon="open" label="Open" /><Tool icon="save" label="Save" />
            <Divider />
            <Tool icon="print" label="Print" /><Tool icon="preview" label="Print preview" /><Tool icon="spell" label="Check spelling" />
            <Divider />
            <Tool icon="cut" label="Cut" /><Tool icon="copy" label="Copy" /><Tool icon="paste" label="Paste" />
            <Divider />
            <Tool icon="undo" label="Undo" /><Tool icon="redo" label="Redo" />
            <Divider />
            <Tool icon="alignTop" label="Align across" /><Tool icon="alignLeft" label="Align down" />
            <Divider />
            <Tool icon="fx" label="Insert function" /><Tool icon="cup" label="Insert unit" /><Tool icon="equals" label="Calculate" />
            <Divider />
            <Tool icon="link" label="Insert hyperlink" /><Tool icon="component" label="Insert component" /><Tool icon="table" label="Insert table" />
            <Divider />
            <Combo label="Zoom" value="100%" width={61} />
            <Divider />
            <Tool icon="help" label="Help" />
          </Toolbar>
        </RebarRow>
        <RebarRow $short>
          <Toolbar>
            <Combo label="Style" value="Normal" width={130} />
            <Combo label="Font" value="Arial" width={160} />
            <Combo label="Size" value="10" width={45} />
            <Divider />
            <ToolButton type="button" aria-label="Bold"><Letter $kind="b">B</Letter></ToolButton>
            <ToolButton type="button" aria-label="Italic"><Letter $kind="i">I</Letter></ToolButton>
            <ToolButton type="button" aria-label="Underline"><Letter $kind="u">U</Letter></ToolButton>
            <Divider />
            <Tool icon="left" label="Align left" active /><Tool icon="center" label="Center" /><Tool icon="right" label="Align right" />
            <Divider />
            <Tool icon="bullets" label="Bullets" /><Tool icon="numbers" label="Numbering" />
            <Divider />
            <Tool icon="sup" label="Superscript" /><Tool icon="sub" label="Subscript" />
          </Toolbar>
        </RebarRow>
        <RebarRow $short>
          <Toolbar>
            <Tool icon="calc" label="Calculator" active /><Tool icon="graph" label="Graph" /><Tool icon="matrix" label="Matrix" />
            <Tool icon="xeq" label="Evaluation" /><Tool icon="integral" label="Calculus" /><Tool icon="bool" label="Boolean" />
            <Tool icon="program" label="Programming" /><Tool icon="greek" label="Greek" /><Tool icon="cap" label="Symbolic" />
          </Toolbar>
          <Toolbar>
            <Tool icon="check" label="Check box" /><Tool icon="radio" label="Radio button" /><Tool icon="push" label="Push button" />
            <Tool icon="slider" label="Slider" /><Tool icon="text" label="Text box" /><Tool icon="list" label="List box" />
          </Toolbar>
        </RebarRow>
      </Rebar>

      <DocFrame>
        <Sheet>
          <MarginLine $x={564} />
          {atsResults.map((result, i) => (
            <Formula key={i} x={34} y={3 + 64 * i} name={`Yисхупатс${i + 1}`} source={`Y${i + 1}упатс`} factor={`kвнупатс${i + 1}`} result={result} />
          ))}
          {[1, 2, 3, 4].map((n) => (
            <Formula key={n} x={n === 1 ? 42 : 34} y={380 + 72 * n} name={`YисхIP${n}`} source={`Y${n}IP`} factor={`kвнIP${n}`} result={<span>0</span>} />
          ))}
          {[1, 2, 3, 4].map((n) => (
            <Formula key={n} small x={612} y={392 + 85 * n} name={`YисхIP${n}`} source={`Y${n}IP`} factor={`kвнIP${n}`} />
          ))}
          {values.map((v) => <Value key={`${v.x}-${v.y}`} {...v} />)}
          {units.map(([x, y]) => <Region key={`${x}-${y}`} $x={x} $y={y}>Эрланг</Region>)}
          {[488, 573, 658, 743].map((y) => <Region key={y} $x={1075} $y={y} $small>Эрланг</Region>)}
          <SelectionTop />
          <SelectionEdge />
          <PageBreak $x={585} $y={461} $width={605} />
          <PageBreak $x={0} $y={619} />
          <MarginLine $x={1128} />
          <Crosshair width="9" height="9" viewBox="0 0 9 9" aria-hidden="true" shapeRendering="crispEdges">
            <path d="M0 4.5h9M4.5 0v9" stroke="#f00" />
          </Crosshair>
        </Sheet>
        <ScrollBar $vertical>
          <ScrollButton type="button" aria-label="Scroll up"><Chevron dir="up" /></ScrollButton>
          <Track $grow={35} />
          <ScrollButton type="button" aria-label="Vertical position"><Grip vertical /></ScrollButton>
          <Track $grow={63} />
          <ScrollButton type="button" aria-label="Scroll down"><Chevron dir="down" /></ScrollButton>
        </ScrollBar>
        <ScrollBar>
          <ScrollButton type="button" aria-label="Scroll left"><Chevron dir="left" /></ScrollButton>
          <ScrollButton type="button" aria-label="Horizontal position"><Grip /></ScrollButton>
          <Track $grow={1} />
          <ScrollButton type="button" aria-label="Scroll right"><Chevron dir="right" /></ScrollButton>
        </ScrollBar>
        <Corner />
      </DocFrame>

      <StatusBar>
        <StatusHint>Press F1 for help.</StatusHint>
        <StatusCell $width={34}>АВТО</StatusCell>
        <StatusCell $width={28} />
        <StatusCell $width={30}>NUM</StatusCell>
        <StatusCell $width={82}>Страница 7</StatusCell>
      </StatusBar>

      <Palette aria-label="Калькулятор">
        <PaletteTitle>
          Калькулятор
          <PaletteClose type="button" aria-label="Close palette">
            <svg width="7" height="7" viewBox="0 0 7 7" aria-hidden="true"><path d="M1 1l5 5M6 1L1 6" stroke="#fff" strokeWidth="1.5" /></svg>
          </PaletteClose>
        </PaletteTitle>
        <Keys>
          {keys.map(([label, glyph, word]) => (
            <Key key={label} type="button" aria-label={label} $word={word}>{glyph}</Key>
          ))}
        </Keys>
      </Palette>
    </Frame>
  );
}
